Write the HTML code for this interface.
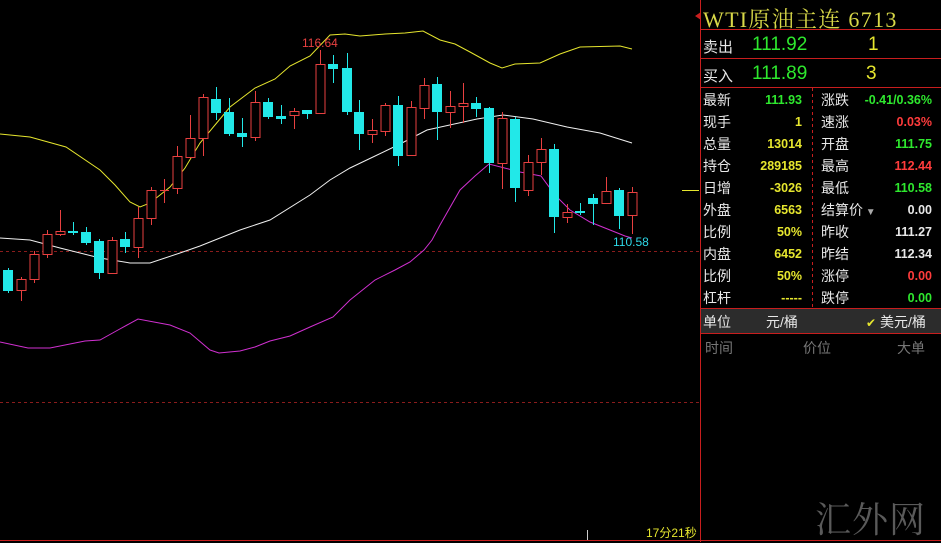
<!DOCTYPE html>
<html><head><meta charset="utf-8"><style>
body{margin:0;background:#000;width:941px;height:542px;overflow:hidden;position:relative;font-family:"Liberation Sans","Noto Sans CJK SC",sans-serif}
.a{position:absolute;white-space:nowrap}
.l{color:#e8e8e8;font-size:14px}
.col div{height:22px;line-height:22px;overflow:hidden}
.v{font-size:12.5px;font-weight:bold;text-align:right}
.y{color:#e6e62e}.g{color:#2ee82e}.r{color:#ff3c3c}.w{color:#e8e8e8}
</style></head><body>
<svg class="a" style="left:0;top:0" width="941" height="542">
<line x1="0" y1="251.5" x2="699" y2="251.5" stroke="#8a1c1c" stroke-dasharray="3,3"/>
<line x1="0" y1="402.5" x2="699" y2="402.5" stroke="#8a1c1c" stroke-dasharray="3,3"/>
<line x1="700.5" y1="0" x2="700.5" y2="542" stroke="#c81e1e"/>
<line x1="0" y1="540.5" x2="941" y2="540.5" stroke="#c81e1e"/>
<line x1="587.5" y1="530" x2="587.5" y2="540" stroke="#ccc"/>
<line x1="682" y1="190.5" x2="699" y2="190.5" stroke="#e6e62e"/>
<polyline fill="none" stroke="#e6e62e" stroke-width="1" points="0,134 30,137 66,147 100,170 115,185 130,202 140,207 150,203 170,187 185,168 200,143 215,125 230,107 255,88 275,79 290,66 310,56 330,35 345,34 360,36 385,34 405,33 423,31 440,40 455,44 470,52 490,63 502,68 515,64 540,63 560,54 580,47 620,46 632,49"/>
<polyline fill="none" stroke="#f0f0f0" stroke-width="1" points="0,238 30,240 60,248 100,258 130,263 150,263 180,253 200,246 240,230 270,220 310,195 330,180 350,168 373,157 400,144 427,130 477,119 503,115 533,119 567,127 600,133 632,143"/>
<polyline fill="none" stroke="#d030d0" stroke-width="1" points="0,342 28,348 50,348 85,341 100,340 118,330 138,319 170,325 190,333 210,350 219,353 240,351 255,347 270,341 290,336 310,327 333,317 350,300 375,280 395,270 410,262 424,250 432,240 440,225 460,190 475,176 489,164 520,172 541,176 555,195 570,210 590,222 610,230 625,236 632,238"/>
<g stroke-width="1">
<line x1="8.5" y1="268" x2="8.5" y2="293" stroke="#22e8e8"/><rect x="3" y="270" width="10" height="21" fill="#22e8e8"/>
<line x1="21.5" y1="277" x2="21.5" y2="301" stroke="#e84040"/><rect x="17" y="279.5" width="9" height="11" fill="#000" stroke="#e84040"/>
<line x1="34.5" y1="251" x2="34.5" y2="283" stroke="#e84040"/><rect x="30" y="254.5" width="9" height="25" fill="#000" stroke="#e84040"/>
<line x1="47.5" y1="230" x2="47.5" y2="258" stroke="#e84040"/><rect x="43" y="234.5" width="9" height="20" fill="#000" stroke="#e84040"/>
<line x1="60.5" y1="210" x2="60.5" y2="236" stroke="#e84040"/><rect x="56" y="231.5" width="9" height="3" fill="#000" stroke="#e84040"/>
<line x1="73.5" y1="222" x2="73.5" y2="235" stroke="#22e8e8"/><rect x="68" y="231" width="10" height="2" fill="#22e8e8"/>
<line x1="86.5" y1="227" x2="86.5" y2="245" stroke="#22e8e8"/><rect x="81" y="232" width="10" height="11" fill="#22e8e8"/>
<line x1="99.5" y1="239" x2="99.5" y2="279" stroke="#22e8e8"/><rect x="94" y="241" width="10" height="32" fill="#22e8e8"/>
<line x1="112.5" y1="237" x2="112.5" y2="273" stroke="#e84040"/><rect x="108" y="240.5" width="9" height="33" fill="#000" stroke="#e84040"/>
<line x1="125.5" y1="232" x2="125.5" y2="253" stroke="#22e8e8"/><rect x="120" y="239" width="10" height="8" fill="#22e8e8"/>
<line x1="138.5" y1="207" x2="138.5" y2="258" stroke="#e84040"/><rect x="134" y="218.5" width="9" height="29" fill="#000" stroke="#e84040"/>
<line x1="151.5" y1="187" x2="151.5" y2="225" stroke="#e84040"/><rect x="147" y="190.5" width="9" height="28" fill="#000" stroke="#e84040"/>
<line x1="164.5" y1="179" x2="164.5" y2="203" stroke="#e84040"/><line x1="160" y1="190.5" x2="169" y2="190.5" stroke="#e84040"/>
<line x1="177.5" y1="146" x2="177.5" y2="194" stroke="#e84040"/><rect x="173" y="156.5" width="9" height="32" fill="#000" stroke="#e84040"/>
<line x1="190.5" y1="115" x2="190.5" y2="157" stroke="#e84040"/><rect x="186" y="138.5" width="9" height="19" fill="#000" stroke="#e84040"/>
<line x1="203.5" y1="94" x2="203.5" y2="156" stroke="#e84040"/><rect x="199" y="97.5" width="9" height="41" fill="#000" stroke="#e84040"/>
<line x1="216.5" y1="87" x2="216.5" y2="120" stroke="#22e8e8"/><rect x="211" y="99" width="10" height="14" fill="#22e8e8"/>
<line x1="229.5" y1="98" x2="229.5" y2="136" stroke="#22e8e8"/><rect x="224" y="112" width="10" height="22" fill="#22e8e8"/>
<line x1="242.5" y1="118" x2="242.5" y2="147" stroke="#22e8e8"/><rect x="237" y="133" width="10" height="4" fill="#22e8e8"/>
<line x1="255.5" y1="91" x2="255.5" y2="141" stroke="#e84040"/><rect x="251" y="102.5" width="9" height="35" fill="#000" stroke="#e84040"/>
<line x1="268.5" y1="98" x2="268.5" y2="119" stroke="#22e8e8"/><rect x="263" y="102" width="10" height="15" fill="#22e8e8"/>
<line x1="281.5" y1="105" x2="281.5" y2="124" stroke="#22e8e8"/><rect x="276" y="116" width="10" height="3" fill="#22e8e8"/>
<line x1="294.5" y1="108" x2="294.5" y2="129" stroke="#e84040"/><rect x="290" y="111.5" width="9" height="4" fill="#000" stroke="#e84040"/>
<line x1="307.5" y1="110" x2="307.5" y2="119" stroke="#22e8e8"/><rect x="302" y="110" width="10" height="4" fill="#22e8e8"/>
<line x1="320.5" y1="50" x2="320.5" y2="113" stroke="#e84040"/><rect x="316" y="64.5" width="9" height="49" fill="#000" stroke="#e84040"/>
<line x1="333.5" y1="55" x2="333.5" y2="83" stroke="#22e8e8"/><rect x="328" y="64" width="10" height="5" fill="#22e8e8"/>
<line x1="347.5" y1="53" x2="347.5" y2="115" stroke="#22e8e8"/><rect x="342" y="68" width="10" height="44" fill="#22e8e8"/>
<line x1="359.5" y1="100" x2="359.5" y2="150" stroke="#22e8e8"/><rect x="354" y="112" width="10" height="22" fill="#22e8e8"/>
<line x1="372.5" y1="119" x2="372.5" y2="143" stroke="#e84040"/><rect x="368" y="130.5" width="9" height="4" fill="#000" stroke="#e84040"/>
<line x1="385.5" y1="103" x2="385.5" y2="136" stroke="#e84040"/><rect x="381" y="105.5" width="9" height="26" fill="#000" stroke="#e84040"/>
<line x1="398.5" y1="96" x2="398.5" y2="166" stroke="#22e8e8"/><rect x="393" y="105" width="10" height="51" fill="#22e8e8"/>
<line x1="411.5" y1="101" x2="411.5" y2="156" stroke="#e84040"/><rect x="407" y="107.5" width="9" height="48" fill="#000" stroke="#e84040"/>
<line x1="424.5" y1="78" x2="424.5" y2="119" stroke="#e84040"/><rect x="420" y="85.5" width="9" height="23" fill="#000" stroke="#e84040"/>
<line x1="437.5" y1="77" x2="437.5" y2="140" stroke="#22e8e8"/><rect x="432" y="84" width="10" height="28" fill="#22e8e8"/>
<line x1="450.5" y1="91" x2="450.5" y2="128" stroke="#e84040"/><rect x="446" y="106.5" width="9" height="6" fill="#000" stroke="#e84040"/>
<line x1="463.5" y1="83" x2="463.5" y2="123" stroke="#e84040"/><rect x="459" y="103.5" width="9" height="3" fill="#000" stroke="#e84040"/>
<line x1="476.5" y1="97" x2="476.5" y2="117" stroke="#22e8e8"/><rect x="471" y="103" width="10" height="6" fill="#22e8e8"/>
<line x1="489.5" y1="107" x2="489.5" y2="173" stroke="#22e8e8"/><rect x="484" y="108" width="10" height="55" fill="#22e8e8"/>
<line x1="502.5" y1="112" x2="502.5" y2="189" stroke="#e84040"/><rect x="498" y="118.5" width="9" height="45" fill="#000" stroke="#e84040"/>
<line x1="515.5" y1="117" x2="515.5" y2="202" stroke="#22e8e8"/><rect x="510" y="119" width="10" height="69" fill="#22e8e8"/>
<line x1="528.5" y1="155" x2="528.5" y2="196" stroke="#e84040"/><rect x="524" y="162.5" width="9" height="28" fill="#000" stroke="#e84040"/>
<line x1="541.5" y1="138" x2="541.5" y2="175" stroke="#e84040"/><rect x="537" y="149.5" width="9" height="13" fill="#000" stroke="#e84040"/>
<line x1="554.5" y1="144" x2="554.5" y2="233" stroke="#22e8e8"/><rect x="549" y="149" width="10" height="68" fill="#22e8e8"/>
<line x1="567.5" y1="204" x2="567.5" y2="223" stroke="#e84040"/><rect x="563" y="212.5" width="9" height="5" fill="#000" stroke="#e84040"/>
<line x1="580.5" y1="203" x2="580.5" y2="215" stroke="#22e8e8"/><rect x="575" y="211" width="10" height="2" fill="#22e8e8"/>
<line x1="593.5" y1="194" x2="593.5" y2="225" stroke="#22e8e8"/><rect x="588" y="198" width="10" height="6" fill="#22e8e8"/>
<line x1="606.5" y1="177" x2="606.5" y2="203" stroke="#e84040"/><rect x="602" y="191.5" width="9" height="12" fill="#000" stroke="#e84040"/>
<line x1="619.5" y1="188" x2="619.5" y2="229" stroke="#22e8e8"/><rect x="614" y="190" width="10" height="26" fill="#22e8e8"/>
<line x1="632.5" y1="187" x2="632.5" y2="234" stroke="#e84040"/><rect x="628" y="192.5" width="9" height="23" fill="#000" stroke="#e84040"/>
</g>
<text x="302" y="47" fill="#e84040" font-size="12" font-family="Liberation Sans">116.64</text>
<text x="613" y="246" fill="#2ed8e8" font-size="12" font-family="Liberation Sans">110.58</text>
<line x1="700" y1="29.5" x2="941" y2="29.5" stroke="#c81e1e"/>
<line x1="700" y1="58.5" x2="941" y2="58.5" stroke="#c81e1e"/>
<line x1="700" y1="87.5" x2="941" y2="87.5" stroke="#c81e1e"/>
<line x1="812.5" y1="88" x2="812.5" y2="308" stroke="#c81e1e" stroke-dasharray="3,3"/>
<rect x="701" y="309" width="240" height="24" fill="#2c2c2c"/>
<line x1="700" y1="308.5" x2="941" y2="308.5" stroke="#c81e1e"/>
<line x1="700" y1="333.5" x2="941" y2="333.5" stroke="#c81e1e"/>
<polygon points="695,16 701,12 701,20" fill="#c81e1e"/>
</svg>
<div class="a" style="left:703px;top:3px;font-size:22px;color:#d8d848;letter-spacing:1.3px;font-family:'Liberation Serif','Noto Serif CJK SC',serif">WTI原油主连 6713</div>
<div class="a l" style="left:703px;top:36px;font-size:15px">卖出</div>
<div class="a g" style="left:752px;top:34px;font-size:19px">111.92</div>
<div class="a y" style="left:868px;top:34px;font-size:19px">1</div>
<div class="a l" style="left:703px;top:65px;font-size:15px">买入</div>
<div class="a g" style="left:752px;top:63px;font-size:19px">111.89</div>
<div class="a y" style="left:866px;top:63px;font-size:19px">3</div>
<div class="a col" style="left:703px;top:89px;width:100px">
<div class="l">最新</div><div class="l">现手</div><div class="l">总量</div><div class="l">持仓</div><div class="l">日增</div><div class="l">外盘</div><div class="l">比例</div><div class="l">内盘</div><div class="l">比例</div><div class="l">杠杆</div></div>
<div class="a v col" style="left:720px;top:89px;width:82px">
<div class="g">111.93</div><div class="y">1</div><div class="y">13014</div><div class="y">289185</div><div class="y">-3026</div><div class="y">6563</div><div class="y">50%</div><div class="y">6452</div><div class="y">50%</div><div class="y">-----</div></div>
<div class="a col" style="left:821px;top:89px;width:80px">
<div class="l">涨跌</div><div class="l">速涨</div><div class="l">开盘</div><div class="l">最高</div><div class="l">最低</div><div class="l">结算价<span style="color:#aaa;font-size:10px"> ▼</span></div><div class="l">昨收</div><div class="l">昨结</div><div class="l">涨停</div><div class="l">跌停</div></div>
<div class="a v col" style="left:840px;top:89px;width:92px">
<div class="g">-0.41/0.36%</div><div class="r">0.03%</div><div class="g">111.75</div><div class="r">112.44</div><div class="g">110.58</div><div class="w">0.00</div><div class="w">111.27</div><div class="w">112.34</div><div class="r">0.00</div><div class="g">0.00</div></div>
<div class="a l" style="left:703px;top:312px">单位</div>
<div class="a l" style="left:766px;top:312px">元/桶</div>
<div class="a l" style="left:866px;top:312px"><span class="y" style="font-size:12px">✔</span> 美元/桶</div>
<div class="a" style="left:705px;top:338px;color:#777;font-size:14px">时间</div>
<div class="a" style="left:803px;top:338px;color:#777;font-size:14px">价位</div>
<div class="a" style="left:897px;top:338px;color:#777;font-size:14px">大单</div>
<div class="a y" style="left:646px;top:524px;font-size:12px">17分21秒</div>
<div class="a" style="left:815px;top:492px;color:#5a5a5a;font-size:36px;font-family:'Noto Serif CJK SC',serif;letter-spacing:1px">汇外网</div>
</body></html>
